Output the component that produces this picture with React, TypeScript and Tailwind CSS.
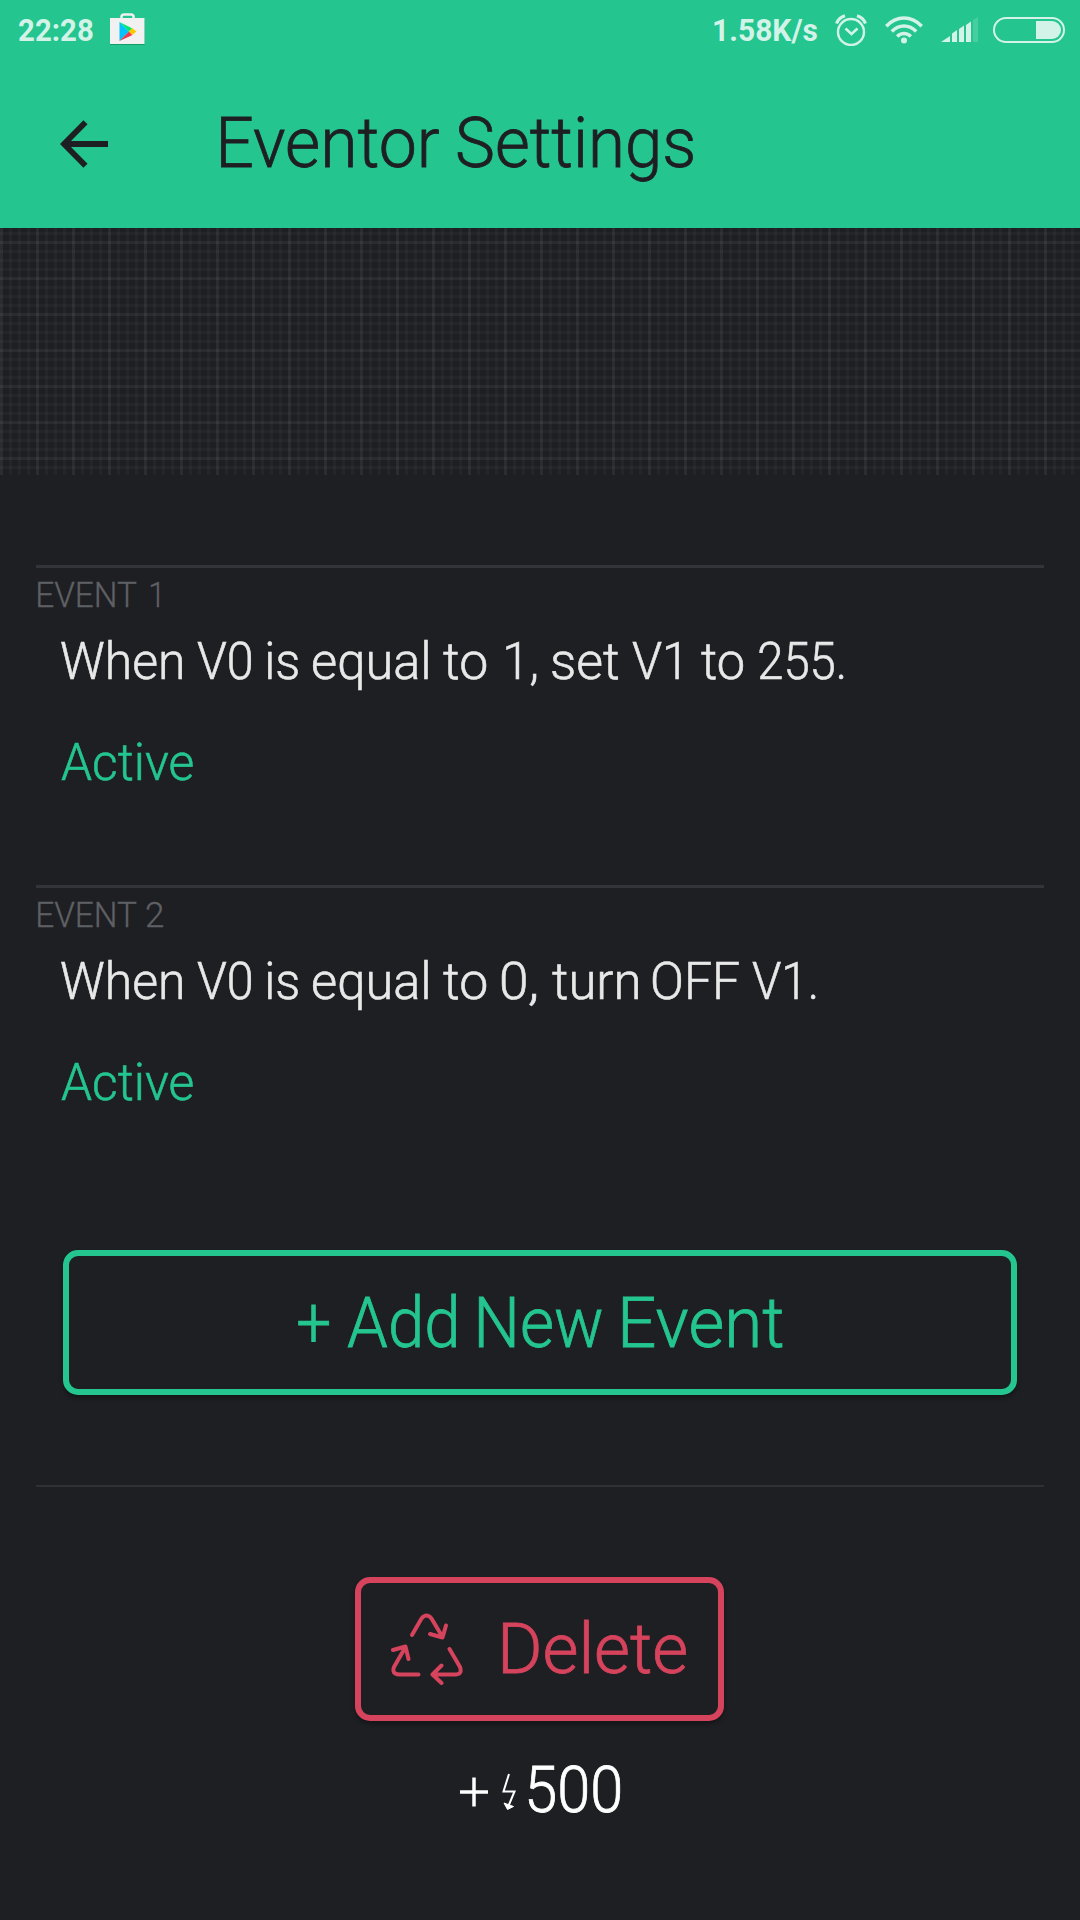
import { useLayoutEffect, useRef, useState } from "react";

type WordProps = { text: string; width: number; gap?: number };

/* A word whose ink is condensed to a given width. */
function Word({ text, width, gap = 0 }: WordProps) {
  const ref = useRef<HTMLSpanElement>(null);
  const [fit, setFit] = useState({ scale: 1, shift: 0 });
  useLayoutEffect(() => {
    const el = ref.current;
    const ctx = document.createElement("canvas").getContext("2d");
    if (!el || !ctx) return;
    const s = getComputedStyle(el);
    ctx.font = `${s.fontWeight} ${s.fontSize} ${s.fontFamily}`;
    const m = ctx.measureText(text);
    const scale = width / (m.actualBoundingBoxLeft + m.actualBoundingBoxRight);
    setFit({ scale, shift: m.actualBoundingBoxLeft * scale });
  }, [text, width]);
  return (
    <span className="block shrink-0 whitespace-nowrap" style={{ width, marginLeft: gap }}>
      <span
        ref={ref}
        className="inline-block origin-left"
        style={{ transform: `translateX(${fit.shift}px) scaleX(${fit.scale})` }}
      >
        {text}
      </span>
    </span>
  );
}

function Words({ items }: { items: [string, number, number][] }) {
  return (
    <span className="flex">
      {items.map(([text, gap, width], i) => (
        <Word key={i} text={text} gap={gap} width={width} />
      ))}
    </span>
  );
}

function StatusBar() {
  return (
    <div className="flex h-[60px] items-center pl-[18px] pr-[15px] text-[31px] font-bold leading-[60px] text-[#d3f3e8]">
      <span className="pt-[2px]">
        <Words items={[["22:28", 1, 74]]} />
      </span>
      <svg className="ml-[17px] h-[34px] w-[35px]" viewBox="0 0 35 34">
        <path d="M0 6h34.500v26h-34.500z" fill="#159c69" />
        <path d="M11.500 6V3.800Q11.500 1.500 14 1.500H21Q23.500 1.500 23.500 3.800V6" fill="none" stroke="#f1f1f1" strokeWidth="2.500" />
        <path d="M0 5h34.500v26h-34.500z" fill="#f1f1f1" />
        <path d="M9.500 9v19l9.500-9.500z" fill="#00c3ff" />
        <path d="M9.500 9l13 6.500-3.500 3z" fill="#00e676" />
        <path d="M9.500 28l13-6-3.500-3.500z" fill="#f4364c" />
        <path d="M22 15l4.500 3.500-4.500 3.500-3-3.500z" fill="#ffc800" />
      </svg>
      <div className="ml-auto flex items-center">
        <span className="pt-[2px]">
          <Words items={[["1.58K/s", 0, 103]]} />
        </span>
        <svg className="ml-[18px] h-[32px] w-[32px]" viewBox="0 0 32 32" fill="none" stroke="#d3f3e8">
          <circle cx="16" cy="18" r="13" strokeWidth="2.400" />
          <path d="M10.500 14.500l6 5.500 6-5.500" strokeWidth="2.600" />
          <path d="M1.500 9.500Q4 3.500 10 1.800M22 1.800Q28 3.500 30.500 9.500" strokeWidth="3.200" />
        </svg>
        <svg className="ml-[18px] h-[28px] w-[38px]" viewBox="0 0 38 28" fill="none" stroke="#d3f3e8" strokeWidth="3.500">
          <path d="M1.300 10.200Q9 2 19 2T36.700 10.200M6.800 15.500Q12 10 19 10T31.200 15.500M12.200 20.500Q15 17.500 19 17.500T25.800 20.500" />
          <circle cx="19" cy="24.600" r="3" fill="#d3f3e8" stroke="none" />
        </svg>
        <svg className="ml-[18px] h-[26px] w-[37px]" viewBox="0 0 37 26" fill="#d3f3e8">
          <path d="M0 25L9 19V25zM11 25V16.500L16 13V25zM18 25V12L23 8.500V25zM25 25V8L30 4.500V25z" />
          <path d="M32 25V3L37 0V25z" opacity=".2" />
        </svg>
        <div className="ml-[15px] flex h-[26px] w-[72px] items-center justify-end rounded-full border-2 border-[#d3f3e8] pr-[2px]">
          <div className="h-[18px] w-[25px] rounded-r-full bg-[#d3f3e8]" />
        </div>
      </div>
    </div>
  );
}

type EventProps = { label: [string, number, number][]; rule: [string, number, number][] };

function EventItem({ label, rule }: EventProps) {
  return (
    <section className="h-[320px] border-t-[3px] border-[#333439] [-webkit-text-stroke:0.6px]">
      <h2 className="flex h-[54px] items-center text-[35px] font-light leading-none text-[#5f6064] [-webkit-text-stroke:0.3px]">
        <Words items={label} />
      </h2>
      <p className="mt-px flex h-[78px] items-center pl-[25px] text-[52px] leading-none text-[#e8e8e8]">
        <Words items={rule} />
      </p>
      <p className="mt-[23px] flex h-[78px] items-center pl-[25px] text-[52px] leading-none text-[#24c58f]">
        <Words items={[["Active", -0.5, 131.5]]} />
      </p>
    </section>
  );
}

export default function App() {
  return (
    <main className="flex h-[1920px] w-[1080px] flex-col overflow-hidden bg-[#1e1f23] font-[Roboto,sans-serif] font-light">
      <header className="h-[228px] bg-[#24c58f]">
        <StatusBar />
        <div className="flex h-[168px] items-center pl-[60px] text-[70px] leading-none text-[#1e1f23]">
          <svg className="h-12 w-12" viewBox="0 0 48 48" fill="none" stroke="#1e1f23" strokeWidth="5.800">
            <path d="M48 24H5M25.500 2.200L4 24L25.500 45.800" />
          </svg>
          <h1 className="-mt-[2px] ml-[112px] font-light [-webkit-text-stroke:0.8px]">
            <Words items={[["Eventor", 0.5, 218], ["Settings", 19, 235]]} />
          </h1>
        </div>
      </header>

      <div className="h-[247px] bg-[repeating-linear-gradient(90deg,#ffffff09_0_3px,transparent_3px_36px),repeating-linear-gradient(90deg,#ffffff07_0_3px,transparent_3px_9px),repeating-linear-gradient(180deg,#ffffff07_0_3px,transparent_3px_36px),repeating-linear-gradient(180deg,#ffffff07_0_3px,transparent_3px_9px)] bg-[position:0_0,0_0,0_-23px,0_-5px] bg-[size:100%_100%,100%_100%,100%_288px,100%_288px]" />

      <div className="mt-[90px] px-9">
        <EventItem
          label={[["EVENT", 2, 99], ["1", 14, 8]]}
          rule={[["When", 0, 121], ["V0", 14.5, 54], ["is", 16.5, 31], ["equal", 15, 115], ["to", 15, 43], ["1,", 20, 30], ["set", 16, 66], ["V1", 13.5, 47], ["to", 22, 42], ["255.", 16.5, 85]]}
        />
        <EventItem
          label={[["EVENT", 2, 99], ["2", 9, 17]]}
          rule={[["When", 0, 121], ["V0", 14.5, 54], ["is", 16.5, 31], ["equal", 15, 115], ["to", 15, 43], ["0", 15.5, 23.5], [",", 4, 7], ["turn", 16, 86], ["OFF", 15, 86], ["V1.", 13, 64]]}
        />
      </div>

      <button className="mx-[63px] mt-[45px] flex h-[145px] shrink-0 items-center rounded-[15px] border-[6px] border-[#24c58f] pl-[229px] text-[70px] leading-none text-[#24c58f] shadow-[0_3px_4px_#0005] [-webkit-text-stroke:0.8px]">
        <Words items={[["+", 0, 31], ["Add", 19, 108], ["New", 23, 123], ["Event", 21, 160]]} />
      </button>

      <hr className="mx-9 mt-[90px] border-t-2 border-[#303135]" />

      <div className="mt-[90px] flex flex-col items-center">
        <button className="mr-px flex h-[144px] w-[369px] items-center rounded-[15px] border-[6px] border-[#d5435c] pl-[30px] text-[70px] leading-none text-[#d5435c] shadow-[0_3px_4px_#0005] [-webkit-text-stroke:0.8px]">
          <svg className="h-[72px] w-[72px]" viewBox="0 0 72 72" fill="none" stroke="#d5435c" strokeWidth="4" strokeLinecap="round" strokeLinejoin="round">
            <path d="M21 22L30.500 5.500Q35.500-.5 40.500 5.500L51.500 24M39 21L51.500 24.500L55 12.500" />
            <path d="M58.500 36L69 54Q71.500 61 65 61.500H42M50.500 52.500L41.500 61.500L50.500 70" />
            <path d="M27.500 61.500H8Q.5 61 3 54L14.500 34M2 37L14.500 33.500L17.500 46" />
          </svg>
          <span className="ml-[40px]">
            <Words items={[["Delete", 0, 183]]} />
          </span>
        </button>
        <div className="mt-[38px] flex h-[64px] items-center text-[64px] leading-none text-white [-webkit-text-stroke:0.8px]">
          <svg className="mt-[2px] h-[30px] w-[28px]" viewBox="0 0 28 30" stroke="#fff" strokeWidth="3.500">
            <path d="M0 15H28M14 .5V29.500" />
          </svg>
          <svg className="ml-[14px] mt-px h-[38px] w-[14px]" viewBox="0 0 14 38" fill="none" stroke="#fff" strokeWidth="2">
            <path d="M7 1L1.500 18.500H12.500L6 34" />
            <path d="M2 30L5.500 36.500L11.500 33.500z" fill="#fff" strokeWidth="1" />
          </svg>
          <span className="ml-[13px]">
            <Words items={[["500", 0, 91]]} />
          </span>
        </div>
      </div>
    </main>
  );
}
